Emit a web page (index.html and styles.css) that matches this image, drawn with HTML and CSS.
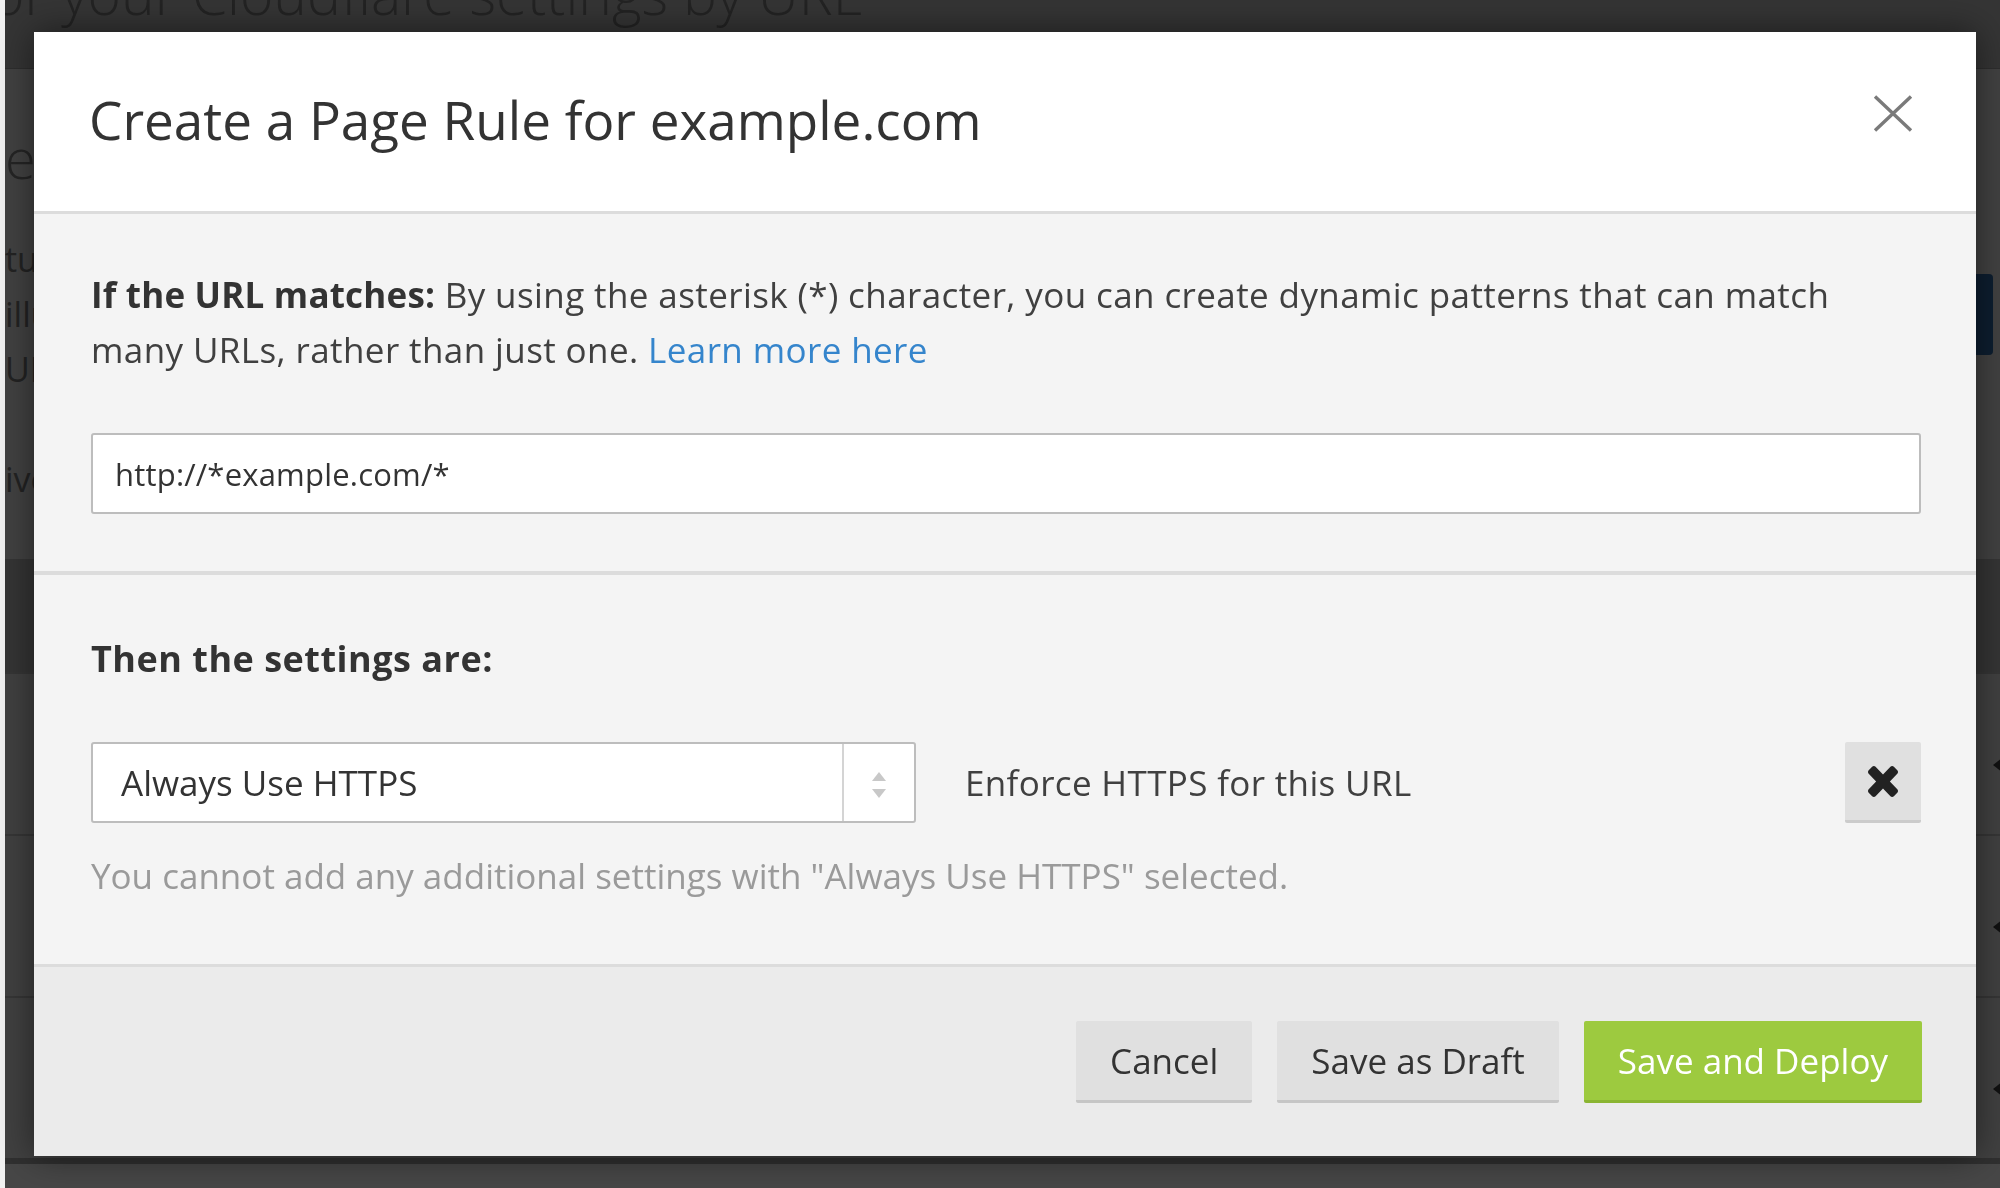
FILE: index.html
```html
<!DOCTYPE html>
<html lang="en">
<head>
<meta charset="utf-8">
<title>Create a Page Rule</title>
<link rel="stylesheet" href="styles.css">
</head>
<body>
<div class="page">
  <header class="page-head">
    <h1 class="page-title">or your Cloudflare settings by URL</h1>
  </header>
  <section class="page-intro">
    <div class="intro-text">
      <h2 class="intro-heading">e</h2>
      <p class="intro-copy">tune how features behave for a URL<br>illustrated by the first matching rule<br>URL patterns can use wildcards<br><br>ive rules are listed below</p>
    </div>
    <div class="intro-side">
      <span class="page-cta"></span>
    </div>
  </section>
  <div class="page-table">
    <div class="table-head"></div>
    <div class="table-row"><span class="row-caret"></span></div>
    <div class="table-row"><span class="row-caret"></span></div>
    <div class="table-row"><span class="row-caret"></span></div>
    <div class="table-foot"></div>
  </div>
</div>

<div class="overlay">
  <div class="modal">
    <div class="modal-head">
      <h2 class="modal-title">Create a Page Rule for example.com</h2>
      <button class="modal-close" aria-label="Close">
        <svg width="40" height="37" viewBox="0 0 40 37"><path d="M2 1.5 L38 35.5 M38 1.5 L2 35.5" stroke="#7a7a7a" stroke-width="3.4" fill="none"/></svg>
      </button>
    </div>
    <div class="modal-section section-url">
      <p class="lead"><strong>If the URL matches:</strong> By using the asterisk (*) character, you can create dynamic patterns that can match many URLs, rather than just one. <a href="#" class="link">Learn more here</a></p>
      <div class="text-input">http://*example.com/*</div>
    </div>
    <div class="modal-section section-settings">
      <h3 class="section-title">Then the settings are:</h3>
      <div class="setting-row">
        <div class="select">
          <span class="select-value">Always Use HTTPS</span>
          <span class="select-arrows"><span class="arrow-up"></span><span class="arrow-down"></span></span>
        </div>
        <span class="setting-desc">Enforce HTTPS for this URL</span>
        <button class="remove-btn" aria-label="Remove">
          <svg width="30" height="31" viewBox="110 366 1188 1188" preserveAspectRatio="none"><path d="M1298 1322q0 40-28 68l-136 136q-28 28-68 28t-68-28l-294-294-294 294q-28 28-68 28t-68-28l-136-136q-28-28-28-68t28-68l294-294-294-294q-28-28-28-68t28-68l136-136q28-28 68-28t68 28l294 294 294-294q28-28 68-28t68 28l136 136q28 28 28 68t-28 68l-294 294 294 294q28 28 28 68z" fill="#222"/></svg>
        </button>
      </div>
      <p class="help">You cannot add any additional settings with "Always Use HTTPS" selected.</p>
    </div>
    <div class="modal-foot">
      <button class="btn">Cancel</button>
      <button class="btn">Save as Draft</button>
      <button class="btn btn-primary">Save and Deploy</button>
    </div>
  </div>
</div>
</body>
</html>
```

FILE: styles.css
```css
* { box-sizing: border-box; }

html, body {
  margin: 0;
  height: 1188px;
  overflow: hidden;
}

body {
  background: #454545;
  font-family: "Open Sans", "Liberation Sans", sans-serif;
}

/* ---------- background page ---------- */
.page {
  border-left: 5px solid #f2f2f2;
  height: 1188px;
  display: flex;
  flex-direction: column;
}

.page-head {
  height: 69px;
  background: #353535;
  border-bottom: 1px solid #2e2e2e;
  overflow: hidden;
}

.page-title {
  margin: -35px 0 0;
  font-size: 57px;
  font-weight: 300;
  line-height: 57px;
  color: #232323;
  white-space: nowrap;
  text-indent: -14px;
}

.page-intro {
  height: 490px;
  background: #424242;
  display: flex;
  justify-content: space-between;
}

.intro-text {
  padding-top: 58px;
  width: 32px;
  overflow: hidden;
}

.intro-heading {
  margin: 0;
  font-size: 56px;
  font-weight: 300;
  line-height: 60px;
  color: #252525;
}

.intro-copy {
  margin: 45px 0 0;
  font-size: 34px;
  line-height: 55px;
  color: #232323;
  white-space: nowrap;
}

.intro-side {
  padding-top: 205px;
}

.page-cta {
  display: block;
  width: 120px;
  height: 81px;
  background: #0d1e30;
  border-radius: 4px;
  margin-right: 7px;
}

.page-table {
  flex: 1;
  display: flex;
  flex-direction: column;
}

.table-head {
  height: 113px;
  background: #353535;
}

.table-row {
  height: 162px;
  background: #414141;
  border-top: 2px solid #363636;
  display: flex;
  align-items: center;
  justify-content: flex-end;
  padding-top: 22px;
}

.row-caret {
  width: 0;
  height: 0;
  border-top: 7px solid transparent;
  border-bottom: 7px solid transparent;
  border-right: 9px solid #111;
  margin-right: -2px;
}

.table-foot {
  flex: 1;
  background: #474747;
  border-top: 6px solid #303030;
}

/* ---------- overlay & modal ---------- */
.overlay {
  position: fixed;
  inset: 0;
  padding: 32px 0 0 34px;
}

.modal {
  width: 1942px;
  background: #f4f4f4;
  box-shadow: 0 0 34px rgba(0, 0, 0, 0.5);
  color: #404040;
}

.modal-head {
  height: 182px;
  background: #fff;
  border-bottom: 3px solid #dcdcdc;
  display: flex;
  align-items: center;
  justify-content: space-between;
  padding: 0 63px 0 55px;
}

.modal-title {
  margin: -5px 0 0;
  font-size: 53px;
  font-weight: 400;
  color: #333;
}

.modal-close {
  border: 0;
  background: none;
  padding: 0;
  margin-top: -16px;
  display: flex;
}

.modal-section {
  padding-left: 57px;
  padding-right: 55px;
}

.section-url {
  padding-top: 53px;
  padding-bottom: 57px;
  border-bottom: 4px solid #dcdcdc;
}

.lead {
  margin: 0 0 56px;
  font-size: 35px;
  letter-spacing: 0.4px;
  line-height: 55px;
  color: #404040;
}

.lead strong {
  font-weight: 700;
  color: #333;
  letter-spacing: 0.2px;
}

.link {
  color: #3585cc;
  text-decoration: none;
}

.text-input {
  height: 81px;
  background: #fff;
  border: 2px solid #bdbdbd;
  border-radius: 3px;
  padding: 0 22px;
  display: flex;
  align-items: center;
  font-size: 31px;
  letter-spacing: 0.2px;
  color: #333;
}

.section-settings {
  padding-top: 56px;
  padding-bottom: 61px;
}

.section-title {
  margin: 0 0 56px;
  font-size: 36px;
  font-weight: 700;
  letter-spacing: 0.5px;
  line-height: 55px;
  color: #333;
}

.setting-row {
  display: flex;
  align-items: center;
  height: 81px;
}

.select {
  width: 825px;
  height: 81px;
  background: #fff;
  border: 2px solid #bdbdbd;
  border-radius: 3px;
  display: flex;
}

.select-value {
  flex: 1;
  display: flex;
  align-items: center;
  padding-left: 28px;
  font-size: 35px;
  color: #333;
}

.select-arrows {
  width: 72px;
  border-left: 2px solid #d4d4d4;
  display: flex;
  flex-direction: column;
  align-items: center;
  justify-content: center;
  gap: 8px;
  padding-top: 4px;
}

.arrow-up {
  width: 0;
  height: 0;
  border-left: 7px solid transparent;
  border-right: 7px solid transparent;
  border-bottom: 9px solid #c8c8c8;
}

.arrow-down {
  width: 0;
  height: 0;
  border-left: 7px solid transparent;
  border-right: 7px solid transparent;
  border-top: 9px solid #c8c8c8;
}

.setting-desc {
  flex: 1;
  margin-left: 49px;
  font-size: 35px;
  letter-spacing: 0.35px;
  color: #404040;
}

.remove-btn {
  width: 76px;
  height: 81px;
  background: #e0e0e0;
  border: 0;
  border-bottom: 3px solid #cbcbcb;
  border-radius: 2px;
  display: flex;
  align-items: center;
  justify-content: center;
  padding: 0;
}

.help {
  margin: 25px 0 0;
  font-size: 35px;
  line-height: 55px;
  color: #9a9a9a;
}

.modal-foot {
  height: 192px;
  background: #ebebeb;
  border-top: 3px solid #dcdcdc;
  display: flex;
  justify-content: flex-end;
  align-items: center;
  gap: 25px;
  padding: 0 54px 0 0;
}

.btn {
  height: 82px;
  padding: 0 34px;
  font-family: "Open Sans", "Liberation Sans", sans-serif;
  font-size: 35px;
  color: #333;
  background: #e0e0e0;
  border: 0;
  border-bottom: 3px solid #c6c6c6;
  border-radius: 2px;
}

.btn-primary {
  background: #9dca3f;
  border-bottom-color: #8ab532;
  color: #fff;
}
```
